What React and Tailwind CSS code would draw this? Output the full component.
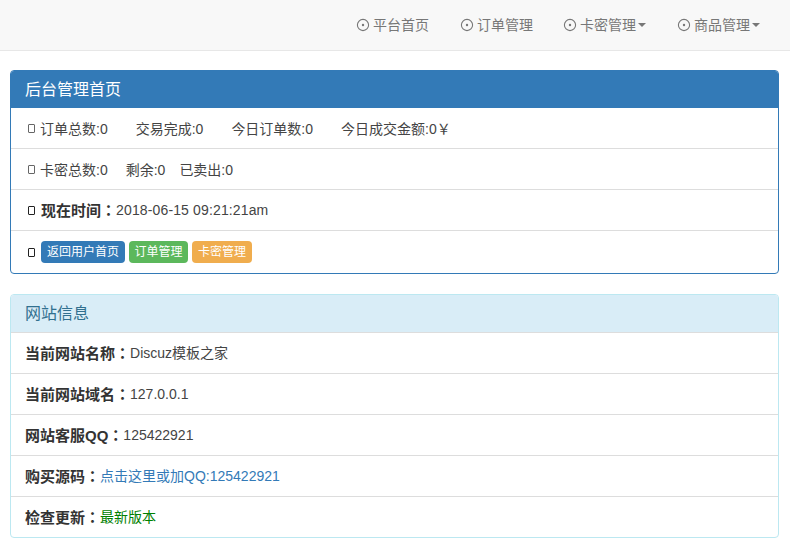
import React from 'react';

const FONT = "font-['Liberation_Sans','Noto_Sans_CJK_SC',sans-serif]";

const NAV_ITEMS = [
  { text: "平台首页", space: "ml-px" },
  { text: "订单管理", space: "ml-px" },
  { text: "卡密管理", space: "ml-0", caret: true },
  { text: "商品管理", space: "ml-px", caret: true },
];

const INFO_ROWS = [
  { label: "当前网站名称", value: "Discuz模板之家", color: "text-[#444]" },
  { label: "当前网站域名", value: "127.0.0.1", color: "text-[#444]" },
  { label: "网站客服QQ", value: "125422921", color: "text-[#444]" },
  { label: "购买源码", value: "点击这里或加QQ:125422921", color: "text-[#337ab7]" },
  { label: "检查更新", value: "最新版本", color: "text-[#008000]" },
];

// the small dot in a circle in front of the menu entries
const DotCircle = () => (
  <svg width="14" height="14" viewBox="0 0 14 14" className="mr-[3px] shrink-0">
    <circle cx="7" cy="7" r="5.6" fill="none" stroke="#777" strokeWidth="1.1" />
    <circle cx="7" cy="7" r="1.2" fill="#777" />
  </svg>
);

// icon font did not load in the original, so it shows an empty glyph box
const EmptyGlyph = ({ dark }) => (
  <span className={`inline-block w-[7px] h-[9px] ml-[3px] border rounded-[1px] shrink-0 ${dark ? "mr-[6px] border-[#222]" : "mr-[5px] border-[#666]"}`}></span>
);

const Row = ({ className = "", children }) => (
  <div className={`flex items-center h-[41px] last:h-[40px] px-[14px] border-b border-[#ddd] last:border-b-0 text-sm text-[#444] ${className}`}>
    {children}
  </div>
);

const Tag = ({ className, children }) => (
  <span className={`h-[22px] flex items-center justify-center rounded text-xs text-white ${className}`}>{children}</span>
);

// bold label; the colon comes from the TC face because it sits centred there
const Label = ({ children }) => (
  <b className="text-[15px] text-[#333]">
    {children}
    <span className="font-['Noto_Sans_CJK_TC',sans-serif]">：</span>
  </b>
);

export default function App() {
  return (
    <div className={`${FONT} bg-white min-h-[546px] overflow-hidden`}>
      <div className="flex justify-end h-[51px] pr-[15px] bg-[#f8f8f8] border-b border-[#e7e7e7]">
        {NAV_ITEMS.map((item) => (
          <div key={item.text} className={`flex items-center px-[15px] text-sm text-[#777] ${item.space}`}>
            <DotCircle />
            {item.text}
            {item.caret && (
              <span className="ml-[2px] w-0 h-0 border-x-4 border-x-transparent border-t-4 border-t-[#777]"></span>
            )}
          </div>
        ))}
      </div>

      <div className="pl-[10px] pr-[10px] pt-[19px]">
        <div className="border border-[#337ab7] rounded overflow-hidden mb-5 mr-px">
          <div className="h-[37px] flex items-center px-[14px] bg-[#337ab7] text-white text-base">后台管理首页</div>
          <Row className="pt-px">
            <EmptyGlyph />
            <span>订单总数:0</span>
            <span className="ml-[28px]">交易完成:0</span>
            <span className="ml-[28px]">今日订单数:0</span>
            <span className="ml-[28px]">今日成交金额:0￥</span>
          </Row>
          <Row className="pt-px">
            <EmptyGlyph />
            <span>卡密总数:0</span>
            <span className="ml-[18px]">剩余:0</span>
            <span className="ml-[14px]">已卖出:0</span>
          </Row>
          <Row>
            <EmptyGlyph dark />
            <Label>现在时间</Label>
            <span className="tracking-[0.14px]">2018-06-15 09:21:21am</span>
          </Row>
          <div className="flex items-center h-[42px] px-[14px] text-sm">
            <EmptyGlyph dark />
            <div className="flex gap-1">
              <Tag className="w-[84px] bg-[#337ab7]">返回用户首页</Tag>
              <Tag className="w-[59px] bg-[#5cb85c]">订单管理</Tag>
              <Tag className="w-[60px] bg-[#f0ad4e]">卡密管理</Tag>
            </div>
          </div>
        </div>

        <div className="border border-[#bce8f1] rounded overflow-hidden mr-px">
          <div className="h-[38px] flex items-center px-[14px] bg-[#d9edf7] text-[#31708f] text-base border-b border-[#ddd]">网站信息</div>
          {INFO_ROWS.map((row) => (
            <Row key={row.label}>
              <Label>{row.label}</Label>
              <span className={row.color}>{row.value}</span>
            </Row>
          ))}
        </div>
      </div>
    </div>
  );
}
